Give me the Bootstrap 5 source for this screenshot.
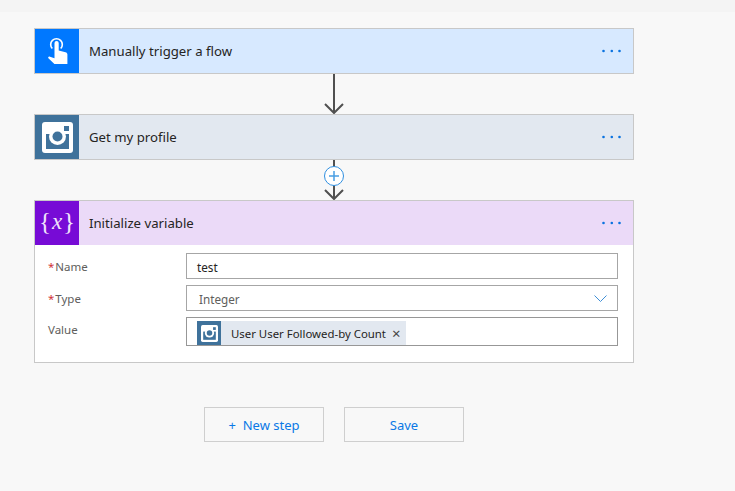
<!DOCTYPE html>
<html lang="en">
<head>
    <meta charset="UTF-8">
    <meta name="viewport" content="width=device-width, initial-scale=1.0">
    <title>Flow designer</title>
    <link href="https://cdn.jsdelivr.net/npm/bootstrap@5.3.2/dist/css/bootstrap.min.css" rel="stylesheet"/>
    <style>
        body {
            background: #f8f8f8;
            font-family: "Noto Sans", "Open Sans", sans-serif;
            font-size: 13.2px;
            color: #252423;
            overflow: hidden;
        }
        .top-band { height: 12px; background: #f4f4f4; }
        .flow-col { width: 600px; margin: 16px 0 0 34px; }
        .step-card { border: 1px solid #c8c8c8; background: #fff; }
        .step-head { height: 44px; }
        .step-icon { width: 44px; height: 44px; flex: none; }
        .step-title { padding-left: 10px; padding-top: 2px; }
        .step-dots { margin-right: 12px; }
        .head-trigger { background: #d7e9ff; }
        .icon-trigger { background: #0078ff; }
        .head-insta { background: #e2e8f0; }
        .icon-insta { background: #3f729b; }
        .head-var { background: #ebdaf8; }
        .icon-var { background: #770bd6; }
        .var-brace { font-family: "Liberation Serif", serif; font-size: 25px; line-height: 1; color: #f1e4fb; padding-bottom: 4px; }
        .var-x { font-size: 23px; padding: 0 1px; }
        .connector { height: 40px; position: relative; }
        .plus-btn { position: absolute; left: 289px; top: 5px; }
        .step-body { padding: 8px 15px 16px 13px; }
        .field-row { margin-bottom: 6px; }
        .field-label { width: 138px; height: 26px; flex: none; color: #605e5c; font-size: 11.5px; line-height: 28px; }
        .label-plain { line-height: 26px; }
        .req { color: #d13438; margin-right: 1px; }
        .field-box { flex: 1; height: 26px; border: 1px solid #a6a6a6; padding: 1px 10px 0; line-height: 24px; font-size: 11.7px; }
        .field-tall { height: 29px; padding: 3px 10px; line-height: 23px; border-color: #979797; }
        .field-select { padding-left: 12px; color: #605e5c; }
        .value-token { background: #e2e8f0; height: 24px; font-size: 11.4px; line-height: 24px; width: 209px; }
        .token-icon { width: 24px; height: 24px; background: #3f729b; flex: none; }
        .token-text { padding-left: 10px; padding-top: 1px; }
        .token-close { margin-left: 6px; font-size: 15px; color: #444; }
        .action-row { margin: 44px 0 0 204px; gap: 20px; }
        .flow-btn {
            width: 120px;
            height: 35px;
            border: 1px solid #cfcfcf;
            border-radius: 0;
            background: #f8f8f8;
            color: #0a78e6;
            font-size: 13px;
            padding: 2px 0 0;
        }
    </style>
</head>
<body>
    <div class="top-band"></div>
    <div class="flow-col">
        <div class="step-card">
            <div class="step-head head-trigger d-flex align-items-center">
                <div class="step-icon icon-trigger">
                    <svg class="d-block" width="44" height="44" viewBox="0 0 44 44">
                        <path d="M17.300 19.500a5.800 5.800 0 1 1 8.400 0" fill="none" stroke="#fff" stroke-width="1.600"/>
                        <path d="M19.500 14a2.100 2.100 0 0 1 4.200 0v7.500l6.800 1.700c1.300.4 1.900 1.200 1.900 2.300v9.500h-13l-6-5.800c-.7-.9.300-1.900 1.600-1.500l4.500 1.500z" fill="#fff"/>
                    </svg>
                </div>
                <div class="step-title flex-grow-1">Manually trigger a flow</div>
                <svg class="step-dots" width="20" height="4" viewBox="0 0 20 4" fill="#0a72e0"><circle cx="2.500" cy="2" r="1.300"/><circle cx="10.800" cy="2" r="1.300"/><circle cx="18.500" cy="2" r="1.300"/></svg>
            </div>
        </div>
        <div class="connector">
            <svg class="d-block mx-auto" width="20" height="40" viewBox="0 0 20 40" fill="none" stroke="#505050" stroke-width="2">
                <path d="M10 0v39M1 30l9 9 9-9"/>
            </svg>
        </div>
        <div class="step-card">
            <div class="step-head head-insta d-flex align-items-center">
                <div class="step-icon icon-insta d-flex align-items-center justify-content-center">
                    <svg width="31" height="31" viewBox="0 0 31 31">
                        <rect width="31" height="31" rx="3" fill="#fff"/>
                        <rect x="4" y="12" width="23" height="15" fill="#3f729b"/>
                        <rect x="22" y="4" width="5" height="5" fill="#3f729b"/>
                        <circle cx="15.500" cy="14.500" r="8.500" fill="#fff"/>
                        <circle cx="15.500" cy="14.500" r="5" fill="#3f729b"/>
                    </svg>
                </div>
                <div class="step-title flex-grow-1">Get my profile</div>
                <svg class="step-dots" width="20" height="4" viewBox="0 0 20 4" fill="#0a72e0"><circle cx="2.500" cy="2" r="1.300"/><circle cx="10.800" cy="2" r="1.300"/><circle cx="18.500" cy="2" r="1.300"/></svg>
            </div>
        </div>
        <div class="connector">
            <svg class="d-block mx-auto" width="20" height="40" viewBox="0 0 20 40" fill="none" stroke="#505050" stroke-width="2">
                <path d="M10 0v39M1 30l9 9 9-9"/>
            </svg>
            <svg class="plus-btn" width="22" height="22" viewBox="0 0 22 22">
                <circle cx="11" cy="11" r="9.500" fill="#fff" stroke="#2f8fe0" stroke-width="1"/>
                <path d="M6 11h10M11 6v10" stroke="#4a9fe3" stroke-width="1.500"/>
            </svg>
        </div>
        <div class="step-card">
            <div class="step-head head-var d-flex align-items-center">
                <div class="step-icon icon-var d-flex align-items-center justify-content-center var-brace">{<i class="var-x">x</i>}</div>
                <div class="step-title flex-grow-1">Initialize variable</div>
                <svg class="step-dots" width="20" height="4" viewBox="0 0 20 4" fill="#0a72e0"><circle cx="2.500" cy="2" r="1.300"/><circle cx="10.800" cy="2" r="1.300"/><circle cx="18.500" cy="2" r="1.300"/></svg>
            </div>
            <div class="step-body">
                <div class="field-row d-flex">
                    <div class="field-label"><span class="req">*</span>Name</div>
                    <div class="field-box">test</div>
                </div>
                <div class="field-row d-flex">
                    <div class="field-label"><span class="req">*</span>Type</div>
                    <div class="field-box field-select d-flex align-items-center justify-content-between">
                        <span>Integer</span>
                        <svg width="13" height="7" viewBox="0 0 13 7" fill="none" stroke="#3f8fd6" stroke-width="1"><path d="M.5.5l6 6 6-6"/></svg>
                    </div>
                </div>
                <div class="d-flex">
                    <div class="field-label label-plain">Value</div>
                    <div class="field-box field-tall">
                        <div class="value-token d-flex align-items-center">
                            <div class="token-icon d-flex align-items-center justify-content-center">
                                <svg width="17" height="17" viewBox="0 0 31 31">
                                    <rect width="31" height="31" rx="3" fill="#fff"/>
                                    <rect x="4" y="12" width="23" height="15" fill="#3f729b"/>
                                    <rect x="22" y="4" width="5" height="5" fill="#3f729b"/>
                                    <circle cx="15.500" cy="14.500" r="8.500" fill="#fff"/>
                                    <circle cx="15.500" cy="14.500" r="5" fill="#3f729b"/>
                                </svg>
                            </div>
                            <span class="token-text text-nowrap">User User Followed-by Count</span>
                            <span class="token-close">&#215;</span>
                        </div>
                    </div>
                </div>
            </div>
        </div>
    </div>
    <div class="action-row d-flex">
        <button type="button" class="btn flow-btn">+&nbsp; New step</button>
        <button type="button" class="btn flow-btn">Save</button>
    </div>
    <script src="https://cdn.jsdelivr.net/npm/bootstrap@5.3.2/dist/js/bootstrap.bundle.min.js"></script>
</body>
</html>
